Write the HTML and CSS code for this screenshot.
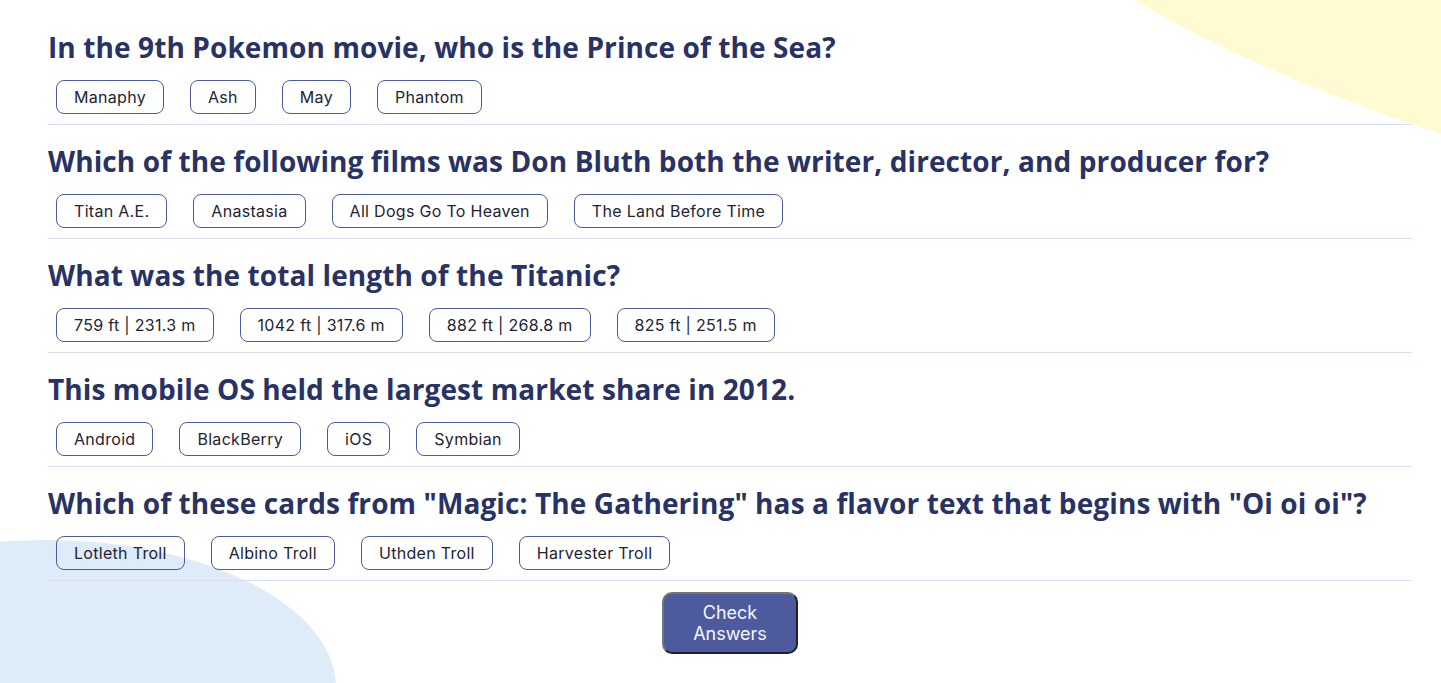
FILE: index.html
```html
<!DOCTYPE html>
<html lang="en">
<head>
<meta charset="utf-8">
<title>Quizzical</title>
<link rel="stylesheet" href="styles.css">
</head>
<body>
<svg class="blob blob-yellow" width="310" height="140" viewBox="0 0 310 140" aria-hidden="true">
  <path d="M4 0 Q120 70 310 134 L310 0 Z" fill="#FFFAD1"/>
</svg>
<svg class="blob blob-blue" width="345" height="145" viewBox="0 0 345 145" aria-hidden="true">
  <ellipse cx="46" cy="150" rx="290" ry="148" fill="#DEEBF8"/>
</svg>
<main class="quiz">
  <section class="question">
    <h2 class="question-title">In the 9th Pokemon movie, who is the Prince of the Sea?</h2>
    <div class="answers">
      <button class="answer">Manaphy</button>
      <button class="answer">Ash</button>
      <button class="answer">May</button>
      <button class="answer">Phantom</button>
    </div>
  </section>
  <section class="question">
    <h2 class="question-title">Which of the following films was Don Bluth both the writer, director, and producer for?</h2>
    <div class="answers">
      <button class="answer">Titan A.E.</button>
      <button class="answer">Anastasia</button>
      <button class="answer">All Dogs Go To Heaven</button>
      <button class="answer">The Land Before Time</button>
    </div>
  </section>
  <section class="question">
    <h2 class="question-title">What was the total length of the Titanic?</h2>
    <div class="answers">
      <button class="answer">759 ft | 231.3 m</button>
      <button class="answer">1042 ft | 317.6 m</button>
      <button class="answer">882 ft | 268.8 m</button>
      <button class="answer">825 ft | 251.5 m</button>
    </div>
  </section>
  <section class="question">
    <h2 class="question-title">This mobile OS held the largest market share in 2012.</h2>
    <div class="answers">
      <button class="answer">Android</button>
      <button class="answer">BlackBerry</button>
      <button class="answer">iOS</button>
      <button class="answer">Symbian</button>
    </div>
  </section>
  <section class="question">
    <h2 class="question-title">Which of these cards from "Magic: The Gathering" has a flavor text that begins with "Oi oi oi"?</h2>
    <div class="answers">
      <button class="answer">Lotleth Troll</button>
      <button class="answer">Albino Troll</button>
      <button class="answer">Uthden Troll</button>
      <button class="answer">Harvester Troll</button>
    </div>
  </section>
  <div class="actions">
    <button class="check-btn">Check Answers</button>
  </div>
</main>
</body>
</html>
```
FILE: styles.css
```css
* { box-sizing: border-box; }

html, body {
  margin: 0;
  height: 100%;
}

body {
  background: #ffffff;
  position: relative;
  overflow: hidden;
  font-family: Inter, "Noto Sans", sans-serif;
}

.blob {
  position: absolute;
  z-index: 0;
  display: block;
}

.blob-yellow {
  top: 0;
  right: 0;
}

.blob-blue {
  left: 0;
  bottom: 0;
}

.quiz {
  position: relative;
  z-index: 1;
  padding: 11px 29px 0 48px;
}

.question {
  padding: 19px 0 10px;
  border-bottom: 1px solid #DBDEF0;
}

.question-title {
  margin: 0 0 16px;
  font-family: "Open Sans", Lato, sans-serif;
  font-weight: 700;
  font-size: 28px;
  line-height: 34px;
  letter-spacing: 0.1px;
  color: #293264;
  white-space: nowrap;
}

.answers {
  display: flex;
  gap: 26px;
  padding-left: 8px;
}

.answer {
  height: 34px;
  padding: 0 17px;
  border: 1px solid #4D5B9E;
  border-radius: 8px;
  background: transparent;
  font-family: Inter, sans-serif;
  font-size: 16px;
  letter-spacing: 0.3px;
  color: #222433;
}

.actions {
  display: flex;
  justify-content: center;
  padding-top: 11px;
}

.check-btn {
  width: 136px;
  height: 62px;
  padding: 7px 20px;
  border: 2px outset #767676;
  border-radius: 10px;
  background: #4D5B9E;
  color: #F5F7FB;
  font-family: Inter, sans-serif;
  font-size: 18px;
  line-height: 21px;
}
```
